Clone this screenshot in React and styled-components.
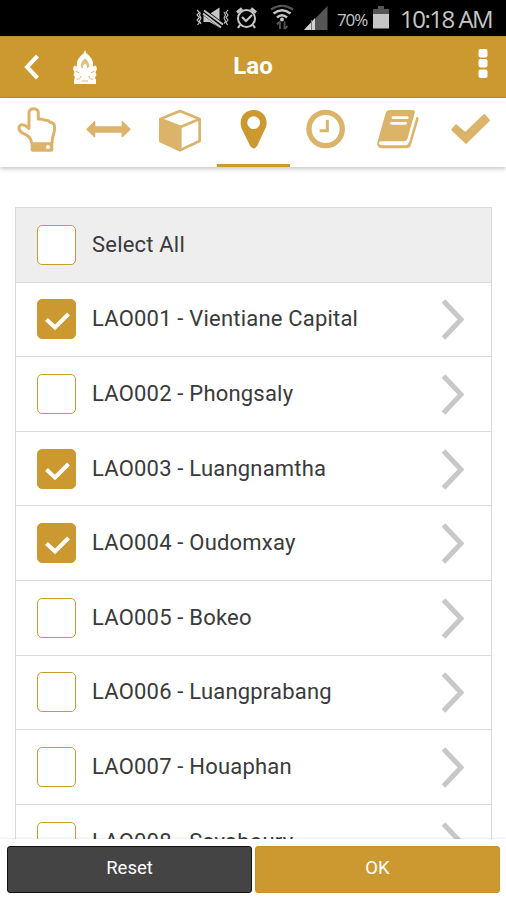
import React from 'react';
import styled, { createGlobalStyle } from 'styled-components';

const gold = '#cb992f';
const paleGold = '#dbb369';

const GlobalStyle = createGlobalStyle`
  * {
    box-sizing: border-box;
  }
  body {
    margin: 0;
    background: #fff;
    font-family: Roboto, 'Open Sans', sans-serif;
  }
`

const Screen = styled.div`
  width: 506px;
  height: 900px;
  display: flex;
  flex-direction: column;
  overflow: hidden;
  background: #fff;
`

const StatusBar = styled.div`
  height: 36px;
  flex: none;
  display: flex;
  justify-content: flex-end;
  padding-right: 11px;
  background: #000;
  color: #c6c6c6;
`

const StatusIcons = styled.svg`
  width: 142px;
  height: 36px;
`

const Battery = styled.svg`
  width: 18px;
  height: 36px;
  margin-left: 4px;
`

const Percent = styled.span`
  width: 31px;
  line-height: 39px;
  font-family: 'Open Sans', sans-serif;
  font-size: 17px;
  letter-spacing: -1.1px;
  white-space: nowrap;
`

const Time = styled.span`
  width: 95px;
  margin-left: 10px;
  line-height: 38px;
  font-family: 'Open Sans', sans-serif;
  font-size: 24px;
  letter-spacing: -1.5px;
  white-space: nowrap;
`

const Header = styled.header`
  height: 62px;
  flex: none;
  display: grid;
  grid-template-columns: 120px 1fr 120px;
  align-items: center;
  background: ${gold};
  border-top: 1px solid #b58f40;
  border-bottom: 1px solid #bd8c1e;
`

const HeaderLeft = styled.div`
  display: flex;
  align-items: center;
  padding-left: 23px;
`

const HeaderRight = styled.div`
  display: flex;
  justify-content: flex-end;
  padding-right: 17px;
`

const BackIcon = styled.svg`
  width: 18px;
  height: 28px;
`

const Logo = styled.svg`
  width: 26px;
  height: 36px;
  margin-left: 31px;
`

const MenuIcon = styled.svg`
  width: 12px;
  height: 32px;
  margin-bottom: 6px;
`

const Title = styled.h1`
  margin: 0;
  padding-bottom: 2px;
  font-size: 24px;
  line-height: 30px;
  font-weight: 700;
  text-align: center;
  color: #fff;
`

const Tabs = styled.nav`
  height: 69px;
  flex: none;
  display: grid;
  grid-template-columns: repeat(7, 1fr);
  background: #fff;
  box-shadow: 0 2px 4px rgba(0, 0, 0, 0.22);
`

const Tab = styled.div`
  height: 69px;
  color: ${props => props.$active ? gold : paleGold};
`

const TabIcon = styled.svg`
  display: block;
  width: 100%;
  height: 69px;
`

const ActiveLine = styled.div`
  height: 3px;
  margin: -3px -1px 0 0;
  background: ${gold};
`

const Content = styled.main`
  flex: 1;
  min-height: 0;
  overflow: hidden;
  padding: 40px 14px 0 15px;
`

const List = styled.div`
  border: 1px solid #dadada;
`

const Row = styled.div`
  height: 74.6px;
  display: flex;
  align-items: center;
  padding: 0 26px 0 21px;
  background: ${props => props.$head ? '#eee' : '#fff'};
  border-bottom: 1px solid #dadada;
`

const Box = styled.span`
  width: 39px;
  height: 40px;
  flex: none;
  display: flex;
  border: 1px solid ${gold};
  border-radius: 5px;
  background: ${props => props.$checked ? gold : '#fff'};
`

const Label = styled.span`
  flex: 1;
  margin-left: 16px;
  padding-bottom: 1px;
  font-size: 22px;
  letter-spacing: 0.2px;
  color: #3a3a3a;
  white-space: nowrap;
`

const Chevron = styled.svg`
  width: 24px;
  height: 42px;
`

const Footer = styled.footer`
  height: 61px;
  flex: none;
  display: flex;
  gap: 3px;
  padding: 7px 6px 7px 7px;
  background: #fff;
  box-shadow: 0 -1px 2px rgba(0, 0, 0, 0.08);
`

const Button = styled.button`
  flex: 1;
  height: 47px;
  padding: 0 0 4px;
  font-family: inherit;
  font-size: 18.5px;
  font-weight: 400;
  color: #fff;
  background: ${props => props.$dark ? '#444' : gold};
  border: 1px solid ${props => props.$dark ? '#111' : '#c4902a'};
  border-radius: 3px;
`

const tabs = [
  {
    name: 'pointer',
    view: '0 6 217 207',
    icon: (
      <>
        <path fill="none" stroke="currentColor" strokeWidth="9" strokeLinejoin="round" d="M95 142C93 125 85 119 71 113C61 108 56 102 57 94C60 83 74 84 87 97V50C87 34 115 34 115 50V69C124 68 130 69 135 73C143 72 148 75 151 79C161 80 165 86 164 98C163 114 157 118 156 142" />
        <path fill="currentColor" fillRule="evenodd" d="M93 139H158Q160 139 160 143V161Q160 167 154 167H98Q92 167 92 161V141ZM144 147a6 6 0 1 0 .1 0Z" />
      </>
    ),
  },
  {
    name: 'distance',
    view: '217 6 217 207',
    icon: <path fill="currentColor" stroke="currentColor" strokeWidth="4" strokeLinejoin="round" d="M262 100L285 77V93H368V77L391 100L368 122V108H285V122Z" />,
  },
  {
    name: 'product',
    view: '434 6 217 207',
    icon: (
      <>
        <path fill="none" stroke="currentColor" strokeWidth="8" strokeLinejoin="round" d="M539 45L598 69V135L539 163L480 135V69ZM480 69L541 93L598 69" />
        <path fill="currentColor" d="M479 70L544 95V163H539L479 136Z" />
      </>
    ),
  },
  {
    name: 'place',
    view: '651 6 217 207',
    active: true,
    icon: <path fill="currentColor" fillRule="evenodd" d="M761 42C783 42 800 58 800 81C800 88 798 94 795 100L771 151Q761 164 751 151L726 100C723 94 722 88 722 81C722 58 739 42 761 42ZM761 61a19 19 0 1 0 .1 0Z" />,
  },
  {
    name: 'time',
    view: '867 6 217 207',
    icon: (
      <>
        <circle cx="977" cy="99" r="50" fill="none" stroke="currentColor" strokeWidth="16" />
        <path fill="none" stroke="currentColor" strokeWidth="9" d="M982 71V104H959" />
      </>
    ),
  },
  {
    name: 'source',
    view: '1084 6 217 207',
    icon: (
      <>
        <path fill="currentColor" d="M1172 42H1236Q1248 42 1245 52L1224 127Q1221 136 1212 136H1145Q1137 136 1138 142Q1140 148 1147 148H1217Q1225 148 1227 140L1248 66Q1249 61 1253 63Q1258 66 1256 72L1234 147Q1231 157 1220 157H1146Q1131 156 1133 139L1158 52Q1161 42 1172 42Z" />
        <path stroke="#fff" strokeWidth="8" strokeLinecap="round" d="M1180 65H1223M1175 82H1218" />
        <path stroke="#fff" strokeWidth="6" strokeLinejoin="round" fill="none" d="M1250 54L1228 130Q1224 142 1215 142H1142" />
      </>
    ),
  },
  {
    name: 'done',
    view: '1301 6 217 207',
    icon: <path fill="currentColor" stroke="currentColor" strokeWidth="6" strokeLinejoin="round" d="M1356 101L1367 88L1395 112L1452 57L1466 73L1397 140Z" />,
  },
]

const places = [
  { label: 'LAO001 - Vientiane Capital', checked: true },
  { label: 'LAO002 - Phongsaly' },
  { label: 'LAO003 - Luangnamtha', checked: true },
  { label: 'LAO004 - Oudomxay', checked: true },
  { label: 'LAO005 - Bokeo' },
  { label: 'LAO006 - Luangprabang' },
  { label: 'LAO007 - Houaphan' },
  { label: 'LAO008 - Sayaboury' },
]

const Checkbox = ({ checked }) => (
  <Box $checked={checked}>
    {checked && (
      <svg width="37" height="38" viewBox="0 0 37 38">
        <path d="M8.500 19.500L17 27.500L30.500 14" fill="none" stroke="#fff" strokeWidth="4" />
      </svg>
    )}
  </Box>
)

const PhoneStatus = () => (
  <StatusBar>
    <StatusIcons viewBox="195 0 142 36" fill="none" stroke="#c6c6c6">
      {/* muted, vibrating */}
      <path d="M197 10l2.500 2.500-2.500 2.500 2.500 2.500-2.500 2.500 2.500 2.500-2 2.500M201 12l-1.500 3 1.500 3-1.500 3 1.500 3M228 10l-2 2.500 2 2.500-2 2.500 2 2.500-2 2.500 1.500 2.500M224 12l1.500 3-1.500 3 1.500 3-1.500 3" strokeWidth="1.1" />
      <path d="M203.500 14h6l10-6.500v20l-10-5.500h-6Z" fill="#c6c6c6" stroke="none" />
      <path d="M202 10.500L223 26.500" stroke="#000" strokeWidth="6" />
      <path d="M204 10.500L223 24.500M203 13.500L221 27.500" strokeWidth="2" />
      {/* alarm */}
      <circle cx="246.500" cy="18.500" r="8.500" strokeWidth="2" />
      <path d="M237 12.500l5-4M251 8.500l5 4" strokeWidth="3" />
      <path d="M240 25l-2 3M253 25l2 3M242 17l4 4 6-6" strokeWidth="2.2" />
      {/* wifi */}
      <path d="M271 9.500Q282 2 293 9.500" stroke="#555" strokeWidth="2.2" />
      <path d="M273.500 13.500Q282 7 290.500 13.500M277 17.500Q282 13 287 17.500" strokeWidth="2.5" />
      <circle cx="282" cy="19.500" r="2" fill="#c6c6c6" stroke="none" />
      <path d="M280 29V21.500M277 24.500l3-3M284.500 21.500V29M287.500 26l-3 3" stroke="#555" strokeWidth="1.8" />
      {/* signal */}
      <path d="M304 30L327.500 6V30Z" fill="#555" stroke="none" />
      <path d="M304 30L315 18V30Z" fill="#d0d0d0" stroke="none" />
      <path d="M311.500 20V30" stroke="#777" />
    </StatusIcons>
    <Percent>70%</Percent>
    <Battery viewBox="0 0 18 36">
      <path d="M1 9H6V6H12V9H17V14H1Z" fill="#555" />
      <path d="M1 14H17V28.500H1Z" fill="#c6c6c6" />
    </Battery>
    <Time>10:18 AM</Time>
  </StatusBar>
)

const App = () => (
  <>
    <GlobalStyle />
    <Screen>
      <PhoneStatus />
      <Header>
        <HeaderLeft>
          <BackIcon viewBox="0 0 18 28">
            <path d="M14.500 3L4 14L14.500 25" fill="none" stroke="#fff" strokeWidth="4" />
          </BackIcon>
          <Logo viewBox="0 0 26 36">
            <path fill="#fff" d="M13 1L14.500 4.500C19 8 22 12 21 17.500L24 16.500L25 20L23.500 23L24.500 26L23 28.500L24 31V35H2V31L3 28.500L1.500 26L2.500 23L1 20L2 16.500L5 17.500C4 12 7 8 11.500 4.500Z" />
            <path fill="#dfc07f" d="M13 9.500Q18 13 17 18L15 19.500Q15.500 16 13 14.500Q10.500 16 11 19.500L9 18Q8 13 13 9.500Z" />
            <path fill="none" stroke="#dcbb76" d="M3.500 22l4 2M22.500 22l-4 2M4.500 30q3.500 1 4.500-3M21.500 30q-3.500 1-4.500-3M10 32h6" />
          </Logo>
        </HeaderLeft>
        <Title>Lao</Title>
        <HeaderRight>
          <MenuIcon viewBox="0 0 12 32" fill="#fff">
            <rect x="1.500" y="1" width="9" height="8.500" rx="2" />
            <rect x="1.500" y="11" width="9" height="8.500" rx="2" />
            <rect x="1.500" y="21.500" width="9" height="8.500" rx="2" />
          </MenuIcon>
        </HeaderRight>
      </Header>
      <Tabs>
        {tabs.map(tab => (
          <Tab key={tab.name} $active={tab.active}>
            <TabIcon viewBox={tab.view}>{tab.icon}</TabIcon>
            {tab.active && <ActiveLine />}
          </Tab>
        ))}
      </Tabs>
      <Content>
        <List>
          <Row $head>
            <Checkbox />
            <Label>Select All</Label>
          </Row>
          {places.map(place => (
            <Row key={place.label}>
              <Checkbox checked={place.checked} />
              <Label>{place.label}</Label>
              <Chevron viewBox="0 0 24 42">
                <path d="M2.500 3L20 21.500L2.500 40" fill="none" stroke="#c8c8c8" strokeWidth="5" />
              </Chevron>
            </Row>
          ))}
        </List>
      </Content>
      <Footer>
        <Button $dark>Reset</Button>
        <Button>OK</Button>
      </Footer>
    </Screen>
  </>
)

export default App;
